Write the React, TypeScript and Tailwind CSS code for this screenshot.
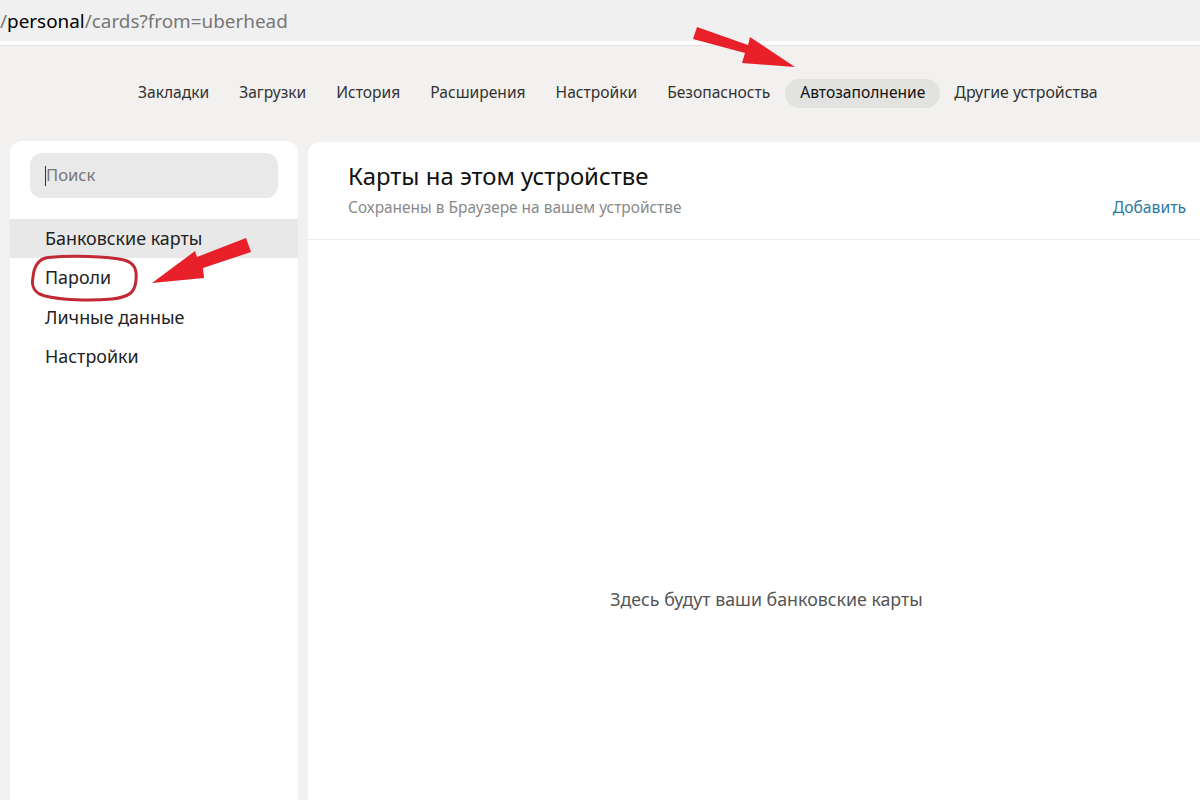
const tabs = ['Закладки', 'Загрузки', 'История', 'Расширения', 'Настройки', 'Безопасность']

const menu = ['Пароли', 'Личные данные', 'Настройки']

export default function App() {
  return (
    <div className="relative h-[800px] w-[1200px] overflow-hidden bg-[#f2f1ef] font-['Noto_Sans',sans-serif] text-[#222]">
      {/* Address bar */}
      <div className="h-[46px] border-b border-[#e2e2e2] bg-white">
        <div className="flex h-[41px] items-center bg-[#f0f0f0] pt-[2px] text-[18.9px] text-[#777]">
          <span>/</span>
          <span className="text-black">personal</span>
          <span>/cards?from=uberhead</span>
        </div>
      </div>

      {/* Tabs */}
      <nav className="flex h-[95px] items-center pl-[138px] text-[15.6px] text-[#333]">
        <div className="flex items-center gap-[30px] pb-[2px]">
          {tabs.map((t) => (
            <a key={t} href="#">{t}</a>
          ))}
        </div>
        <a href="#" className="ml-[15px] flex h-[29px] w-[155px] items-center justify-center rounded-full bg-[#e2e2e0] pb-[2px] text-[#111]">Автозаполнение</a>
        <a href="#" className="ml-[14px] pb-[2px] text-[15.9px]">Другие устройства</a>
      </nav>

      <div className="flex h-[660px] gap-[10px] pl-[10px]">
        {/* Sidebar */}
        <aside className="w-[288px] rounded-t-xl bg-white pt-[12px]">
          <div className="mx-[20px] flex h-[45px] items-center rounded-xl bg-[#e9e9e9] pl-[15px] text-[16.6px] text-[#777]">
            <span className="h-[20px] w-px bg-[#333]" />
            <span>Поиск</span>
          </div>
          <div className="mt-[21px] flex h-[39px] items-center bg-[#e8e8e8] pl-[35px] text-[17.9px] text-[#222]">Банковские карты</div>
          {menu.map((m) => (
            <div key={m} className="flex h-[39.5px] items-center pl-[35px] text-[17.9px] text-[#222]">{m}</div>
          ))}
        </aside>

        {/* Main */}
        <main className="mt-[1px] flex flex-1 flex-col rounded-tl-xl bg-white">
          <div className="relative h-[98px] border-b border-[#ececec] pl-[40px] pt-[16px]">
            <h1 className="text-[23.9px] leading-[36px] text-[#111]">Карты на этом устройстве</h1>
            <p className="mt-[2px] text-[15.45px] leading-[22px] text-[#8a8a8a]">Сохранены в Браузере на вашем устройстве</p>
            <a href="#" className="absolute right-[14px] top-[54px] text-[15.7px] leading-[22px] text-[#2a7a9e]">Добавить</a>
          </div>
          <div className="flex flex-1 items-start justify-center pl-[25px] pt-[346px] text-[17.8px] text-[#555]">Здесь будут ваши банковские карты</div>
        </main>
      </div>

      {/* Red annotations drawn over the screenshot */}
      <svg className="absolute left-0 top-0" width="1200" height="800" viewBox="0 0 1200 800" fill="none">
        <polygon points="697,27 748,45 750,37 795,67 742,63 745,53 693,39" fill="#e8202a" />
        <polygon points="246,238 251,252 203,268 204,278 152,283 195,251 197,257" fill="#e8202a" />
        <path d="M48 257.5 C 70 255.5, 108 256, 124 260 C 135 263, 137 270, 136 280 C 135 292, 130 297, 112 299 C 90 301, 60 300, 45 296 C 34 293, 31 287, 33 277 C 34 266, 38 259, 48 257.5 Z" stroke="#c02a35" strokeWidth="3" />
      </svg>
    </div>
  )
}
